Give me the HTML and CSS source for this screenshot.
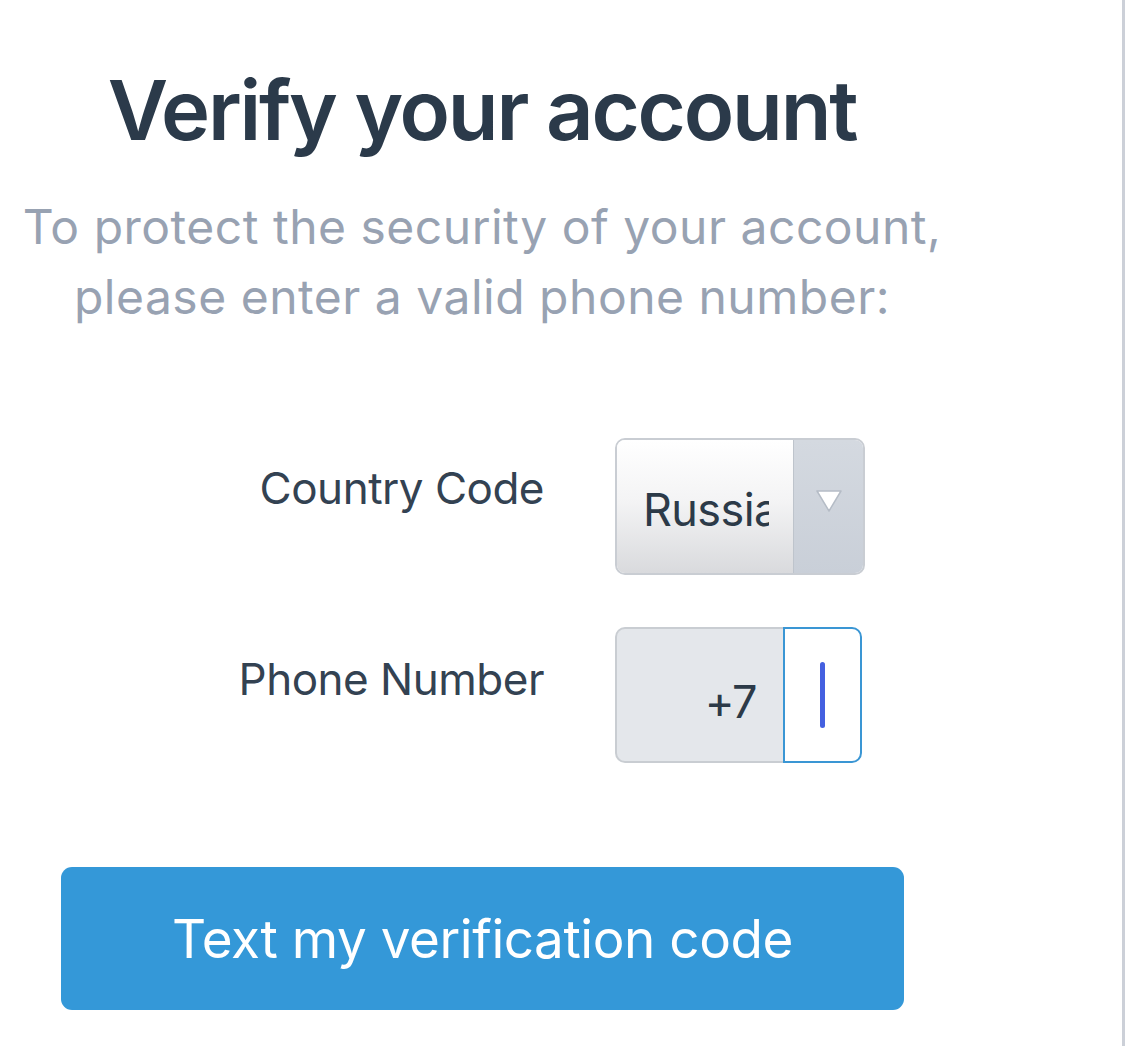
FILE: index.html
```html
<!DOCTYPE html>
<html lang="en">
<head>
<meta charset="utf-8">
<title>Verify your account</title>
<link rel="stylesheet" href="styles.css">
</head>
<body>
<div class="page">
  <main class="panel">
    <h1 class="title">Verify your account</h1>
    <p class="subtitle">To protect the security of your account,<br>please enter a valid phone number:</p>
    <form class="form">
      <div class="row">
        <label class="label">Country Code</label>
        <div class="select">
          <div class="select-value"><span>Russia</span></div>
          <div class="select-arrow">
            <svg width="28" height="24" viewBox="0 0 28 24"><polygon points="2,2 26,2 14,22" fill="#ffffff" stroke="#b5bcc6" stroke-width="1.5" stroke-linejoin="round"/></svg>
          </div>
        </div>
      </div>
      <div class="row row-phone">
        <label class="label">Phone Number</label>
        <div class="phone">
          <div class="phone-prefix">+7</div>
          <div class="phone-input"><span class="caret"></span></div>
        </div>
      </div>
    </form>
    <div class="actions">
      <button class="btn" type="button">Text my verification code</button>
    </div>
  </main>
</div>
</body>
</html>
```
FILE: styles.css
```css
html, body {
  margin: 0;
  padding: 0;
  background: #ffffff;
}
body {
  font-family: "Inter", "Liberation Sans", sans-serif;
}
.page {
  width: 1125px;
  height: 1046px;
  box-sizing: border-box;
  border-right: 3px solid #ccd0d8;
  overflow: hidden;
}
.panel {
  width: 964px;
  padding-top: 60px;
  text-align: center;
}
.title {
  margin: 0;
  font-size: 83px;
  line-height: 100px;
  font-weight: 600;
  color: #2b3a4a;
  letter-spacing: -2.2px;
}
.subtitle {
  margin: 32px 0 0;
  font-size: 48px;
  line-height: 70px;
  font-weight: 400;
  color: #98a2b2;
  letter-spacing: 0.5px;
}
.form {
  margin-top: 106px;
  display: flex;
  flex-direction: column;
  gap: 52px;
}
.row {
  display: grid;
  grid-template-columns: 544px 250px;
  column-gap: 71px;
  align-items: start;
  text-align: right;
}
.label {
  padding-top: 24px;
  font-size: 44px;
  line-height: 52px;
  color: #334252;
  letter-spacing: -0.5px;
}
.row-phone .label {
  padding-top: 26px;
}
.select {
  height: 137px;
  box-sizing: border-box;
  border: 2px solid #c9cdd3;
  border-radius: 10px;
  display: flex;
  overflow: hidden;
  text-align: left;
}
.select-value {
  flex: 1;
  background: linear-gradient(#ffffff 0%, #f4f4f5 45%, #d9dadd 100%);
  padding: 0 24px 0 26px;
  display: flex;
  align-items: center;
  overflow: hidden;
  font-size: 45px;
  color: #2c3a48;
  letter-spacing: -0.6px;
}
.select-value span {
  display: block;
  overflow: hidden;
  white-space: nowrap;
  width: 100%;
  padding-top: 6px;
}
.select-arrow {
  width: 70px;
  border-left: 1px solid #bec4cc;
  background: linear-gradient(#d4d9e0, #c9cfd8);
  display: flex;
  justify-content: center;
  padding-top: 49px;
  box-sizing: border-box;
}
.phone {
  width: 247px;
  height: 136px;
  display: flex;
}
.phone-prefix {
  flex: 1;
  box-sizing: border-box;
  background: #e4e7eb;
  border: 2px solid #c9cdd2;
  border-right: none;
  border-radius: 10px 0 0 10px;
  padding: 45px 27px 0 0;
  font-size: 45px;
  line-height: 56px;
  color: #2c3a48;
  text-align: right;
  letter-spacing: -1.5px;
}
.phone-input {
  width: 79px;
  box-sizing: border-box;
  border: 2px solid #3a96d4;
  border-radius: 0 10px 10px 0;
  background: #ffffff;
  display: flex;
  justify-content: center;
  padding-top: 33px;
}
.caret {
  display: block;
  width: 5px;
  height: 66px;
  border-radius: 3px;
  background: #4460e0;
}
.actions {
  margin-top: 104px;
  padding-left: 61px;
  text-align: left;
}
.btn {
  width: 843px;
  height: 143px;
  border: none;
  border-radius: 11px;
  background: #3498d8;
  color: #ffffff;
  font-family: "Inter", "Liberation Sans", sans-serif;
  font-size: 53px;
  letter-spacing: -0.45px;
  padding: 0;
  cursor: pointer;
}
```
